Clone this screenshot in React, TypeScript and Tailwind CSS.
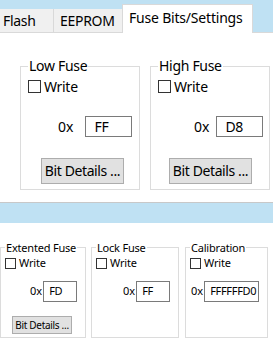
import React from 'react';

const font = { fontFamily: '"Noto Sans", "Open Sans", sans-serif' };

const CheckRow: React.FC<{ small?: boolean }> = ({ small }) => (
  <div className={`flex items-center whitespace-nowrap ${small ? 'gap-[3px] text-[11px] tracking-[-0.2px]' : 'gap-[3px] text-[14px] tracking-[-0.3px]'}`}>
    <span className={`${small ? 'w-[11px] h-[11px]' : 'w-[13px] h-[13px]'} border border-[#333] bg-white`} />
    <span>Write</span>
  </div>
);

const HexInput: React.FC<{ value: string; w: string; small?: boolean }> = ({ value, w, small }) => (
  <div className={`${w} ${small ? 'h-[21px] pl-[5px] text-[11px] tracking-[-0.3px]' : 'h-[21px] pl-[8px] text-[14px] tracking-[-0.3px]'} border border-[#7a7a7a] bg-white flex items-center whitespace-nowrap`}>
    {value}
  </div>
);

const BigGroup: React.FC<{ title: string; value: string; zeroX: string; inputX: string; btnX: string }> = ({ title, value, zeroX, inputX, btnX }) => (
  <fieldset className="w-[120px] h-[133px] border border-[#dcdcdc] px-[7px] pt-0 pb-0 min-w-0">
    <legend className="px-[1px] text-[14px] tracking-[-0.3px] leading-[18px] whitespace-nowrap">{title}</legend>
    <div className="mt-[1px]">
      <CheckRow />
    </div>
    <div className="flex items-center mt-[19px]">
      <span className={`${zeroX} text-[14px]`}>0x</span>
      <div className={inputX}>
        <HexInput value={value} w="w-[47px]" />
      </div>
    </div>
    <div className={`${btnX} mt-[21px]`}>
      <button className="w-[83px] h-[26px] bg-[#e1e1e1] border border-[#adadad] text-[14px] tracking-[-0.4px] leading-none whitespace-nowrap">
        Bit Details ...
      </button>
    </div>
  </fieldset>
);

const SmallGroup: React.FC<{ title: string; children: React.ReactNode; w: string }> = ({ title, children, w }) => (
  <fieldset className={`${w} h-[98px] border border-[#dcdcdc] px-[4px] min-w-0`}>
    <legend className="px-[1px] text-[11px] tracking-[-0.2px] leading-[15px] whitespace-nowrap">{title}</legend>
    <CheckRow small />
    {children}
  </fieldset>
);

const App: React.FC = () => {
  return (
    <div className="w-[273px] h-[346px] bg-white overflow-hidden text-black" style={font}>
      {/* Tabs */}
      <div className="h-[33px] bg-[#bfe1f3] flex items-end">
        <div className="w-[54px] h-[24px] bg-[#f0f0f0] border-r border-b border-[#d9d9d9] pl-[3px] text-[14px] tracking-[-0.3px] flex items-center whitespace-nowrap">
          Flash
        </div>
        <div className="w-[68px] h-[24px] bg-[#f0f0f0] border-b border-[#d9d9d9] pl-[6px] text-[14px] tracking-[-0.3px] flex items-center whitespace-nowrap">
          EEPROM
        </div>
        <div className="w-[131px] h-[29px] bg-white border-l border-r border-t border-[#d9d9d9] pl-[6px] text-[14px] tracking-[-0.2px] flex items-center pb-[3px] whitespace-nowrap">
          Fuse Bits/Settings
        </div>
        <div className="flex-1 h-[1px] border-b border-[#d9d9d9]" />
      </div>

      {/* Upper tab page */}
      <div className="h-[170px] border-b border-[#c8c8c8] flex gap-[10px] pl-[20px] pt-[24px]">
        <BigGroup title="Low Fuse" value="FF" zeroX="ml-[30px]" inputX="ml-[12px]" btnX="ml-[13px]" />
        <BigGroup title="High Fuse" value="D8" zeroX="ml-[36px]" inputX="ml-[7px]" btnX="ml-[11px]" />
      </div>

      {/* Band */}
      <div className="h-[20px] bg-[#bfe1f3]" />

      {/* Lower page */}
      <div className="flex pt-[17px]">
        <SmallGroup title="Extented Fuse" w="w-[86px]">
          <div className="flex items-center mt-[9px]">
            <span className="ml-[25px] text-[11px]">0x</span>
            <div className="ml-[1px]">
              <HexInput value="FD" w="w-[34px]" small />
            </div>
          </div>
          <button className="ml-[7px] mt-[14px] w-[60px] h-[18px] bg-[#e1e1e1] border border-[#adadad] text-[10px] tracking-[-0.3px] leading-none whitespace-nowrap">
            Bit Details ...
          </button>
        </SmallGroup>
        <div className="w-[5px]" />
        <SmallGroup title="Lock Fuse" w="w-[88px]">
          <div className="flex items-center mt-[9px]">
            <span className="ml-[27px] text-[11px]">0x</span>
            <div className="ml-[1px]">
              <HexInput value="FF" w="w-[34px]" small />
            </div>
          </div>
        </SmallGroup>
        <div className="w-[6px]" />
        <SmallGroup title="Calibration" w="w-[83px]">
          <div className="flex items-center mt-[9px]">
            <span className="ml-[1px] text-[11px]">0x</span>
            <div className="ml-[1px]">
              <HexInput value="FFFFFFD0" w="w-[55px]" small />
            </div>
          </div>
        </SmallGroup>
      </div>
    </div>
  );
};

export default App;
